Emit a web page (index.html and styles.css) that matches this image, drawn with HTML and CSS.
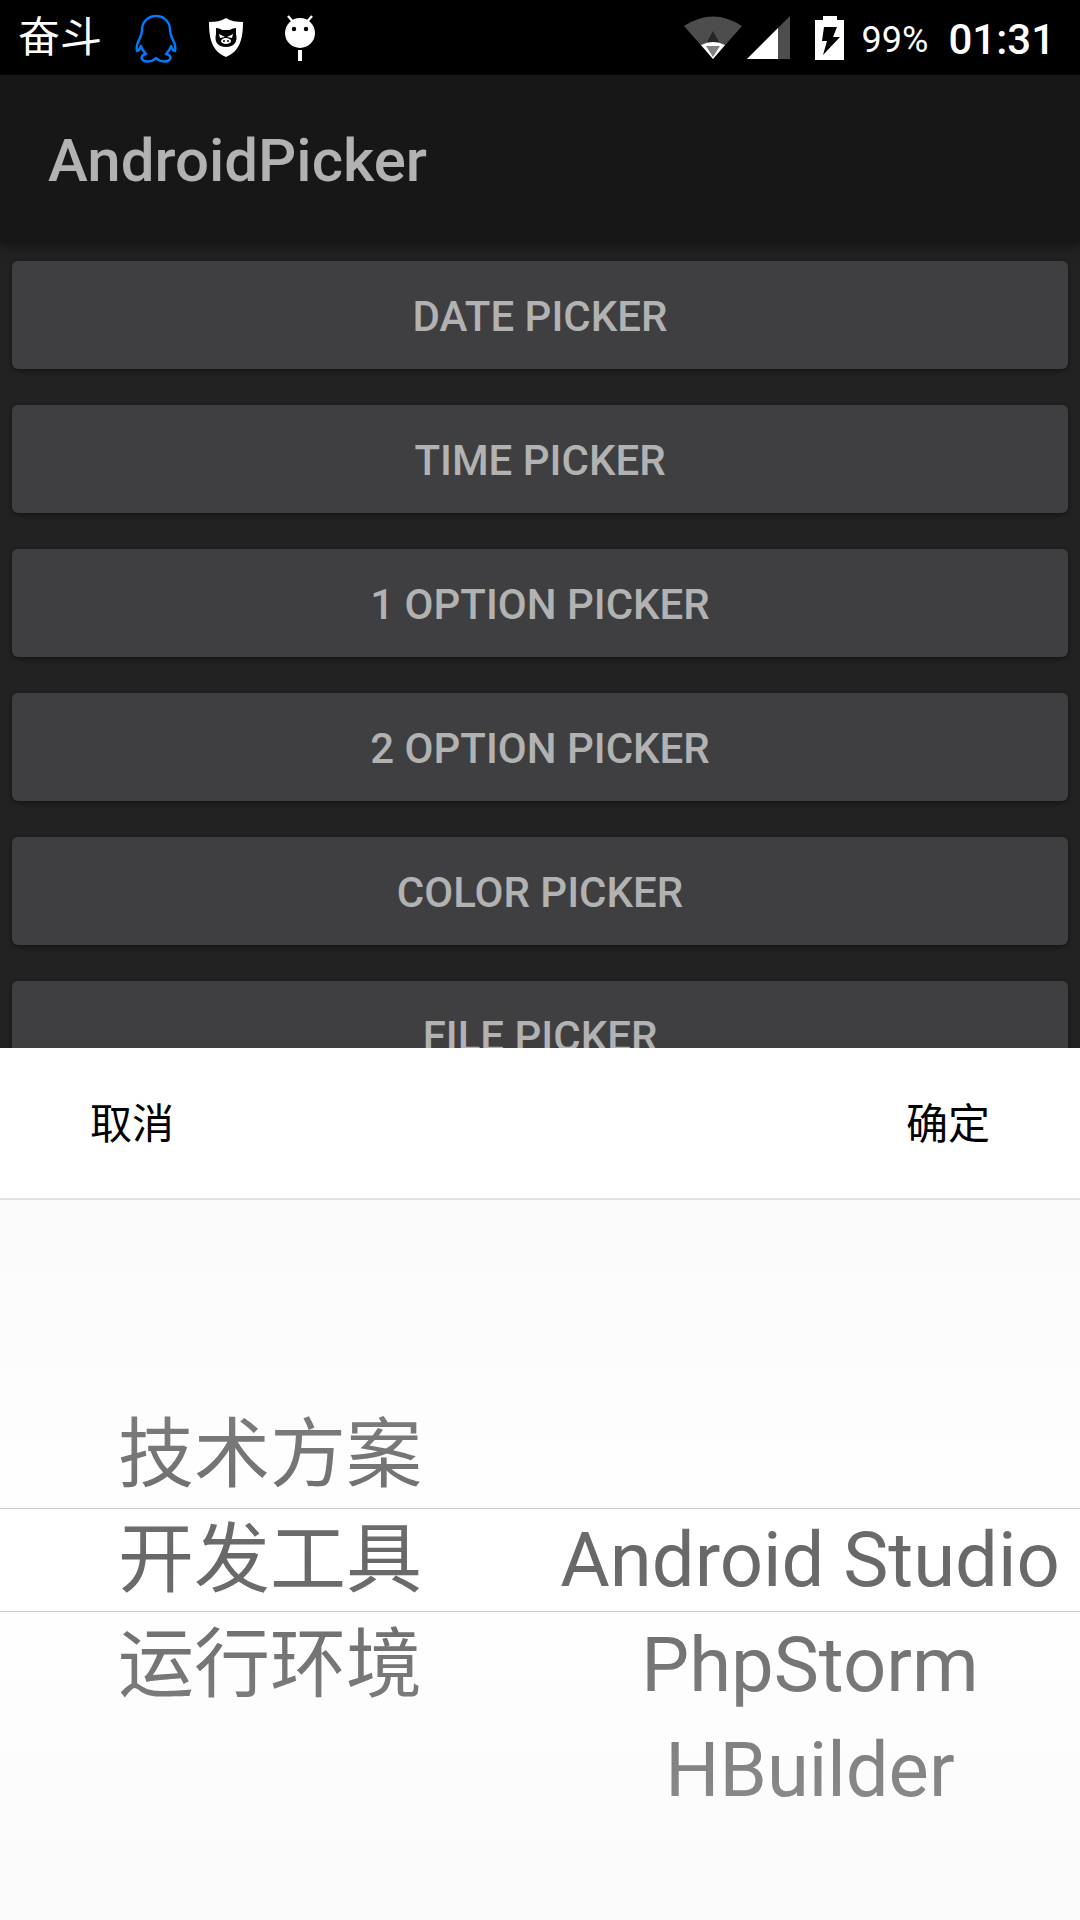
FILE: index.html
```html
<!DOCTYPE html>
<html lang="zh-CN">
<head>
<meta charset="utf-8">
<meta name="viewport" content="width=device-width, initial-scale=1">
<title>AndroidPicker</title>
<link rel="stylesheet" href="styles.css">
</head>
<body>
<div class="screen">
  <div class="status-bar">
    <span class="carrier">奋斗</span>
    <svg class="icon notice" viewBox="0 0 42 50" aria-hidden="true"><path d="M21 3C13 3 7 9 7 17c0 3-1 5-2 8-3 5-4 9-3 13 1 0 3-2 4-5 1 4 3 6 5 8-5 1-6 5-2 7 4 1 9 0 12-3 3 3 8 4 12 3 4-2 3-6-2-7 2-2 4-4 5-8 1 3 3 5 4 5 1-4 0-8-3-13-1-3-2-5-2-8C35 9 29 3 21 3z" fill="none" stroke="#007aff" stroke-width="2.4" stroke-linejoin="round"/></svg>
    <svg class="icon shield" viewBox="0 0 36 40" aria-hidden="true"><path d="M18 0c5 3 10 4 17 4 0 17-3 29-17 35C4 33 1 21 1 4 8 4 13 3 18 0z" fill="#fff"/><path d="M8 10c3 0 5 1 6 2h8c1-1 3-2 6-2v6c2 8-2 13-10 13S6 24 8 16z" fill="#000"/><path d="M11 16l6 3-5 1zM25 16l-6 3 5 1z" fill="#fff"/><ellipse cx="18" cy="23" rx="5" ry="3" fill="#fff"/><circle cx="16" cy="23" r="1"/><circle cx="20" cy="23" r="1"/></svg>
    <svg class="icon robot" viewBox="0 0 32 48" aria-hidden="true"><path d="M4 2l6 7M28 2l-6 7" stroke="#fff" stroke-width="2.4"/><circle cx="16" cy="19" r="15" fill="#fff"/><circle cx="10" cy="15" r="2.2"/><circle cx="22" cy="15" r="2.2"/><path d="M14 36h4v11h-4z" fill="#fff"/></svg>
    <svg class="icon wifi" viewBox="0 0 58 44" aria-hidden="true"><path d="M0 10Q29-9 58 10L29 43z" fill="#4d4d4d"/><path d="M29 15l6 11H23z" fill="#262626"/><path d="M17 29q12-6 24 0L29 43z" fill="#fff"/><path d="M22 30h14l-7 11z" fill="#808080"/></svg>
    <svg class="icon signal" viewBox="0 0 43 43" aria-hidden="true"><path d="M0 43L43 0v43z" fill="#4d4d4d"/><path d="M0 43L31 12v31z" fill="#fff"/></svg>
    <svg class="icon battery" viewBox="0 0 30 44" aria-hidden="true"><path d="M8 0h14v4h7v40H0V4h8z" fill="#fff"/><path d="M9 11h13l-4 10h7L8 39l4-14H7z" fill="#000"/></svg>
    <span class="percent">99%</span>
    <time class="clock">01:31</time>
  </div>
  <header class="app-bar"><h1 class="title">AndroidPicker</h1></header>
  <main class="menu">
    <button class="menu-button" type="button">DATE PICKER</button>
    <button class="menu-button" type="button">TIME PICKER</button>
    <button class="menu-button" type="button">1 OPTION PICKER</button>
    <button class="menu-button" type="button">2 OPTION PICKER</button>
    <button class="menu-button" type="button">COLOR PICKER</button>
    <button class="menu-button" type="button">FILE PICKER</button>
  </main>
  <section class="sheet" role="dialog" aria-label="选择">
    <div class="sheet-actions">
      <button class="action" type="button">取消</button>
      <button class="action" type="button">确定</button>
    </div>
    <div class="wheels">
      <ul class="wheel">
        <li class="option"></li>
        <li class="option">技术方案</li>
        <li class="option selected">开发工具</li>
        <li class="option">运行环境</li>
        <li class="option"></li>
      </ul>
      <ul class="wheel">
        <li class="option"></li>
        <li class="option"></li>
        <li class="option selected">Android Studio</li>
        <li class="option">PhpStorm</li>
        <li class="option">HBuilder</li>
      </ul>
    </div>
  </section>
</div>
</body>
</html>
```

FILE: styles.css
```css
* {
  box-sizing: border-box;
}

body {
  margin: 0;
  background: #222;
  font-family: Roboto, "Noto Sans CJK SC", sans-serif;
}

button {
  border: 0;
  font: inherit;
}

.screen {
  display: flex;
  flex-direction: column;
  height: 100vh;
  overflow: hidden;
}

.status-bar {
  display: flex;
  flex: none;
  align-items: center;
  height: 75px;
  padding: 0 25px 0 18px;
  background: #000;
  color: #fff;
}

.icon {
  flex: none;
}

.carrier {
  font-size: 42px;
  line-height: 74px;
}

.notice {
  width: 42px;
  height: 50px;
  margin-left: 33px;
}

.shield {
  width: 36px;
  height: 40px;
  margin-left: 31px;
}

.robot {
  width: 32px;
  height: 48px;
  margin-left: 40px;
}

.wifi {
  width: 58px;
  height: 44px;
  margin-left: auto;
}

.signal {
  width: 43px;
  height: 43px;
  margin-left: 5px;
}

.battery {
  width: 30px;
  height: 44px;
  margin-left: 25px;
}

.percent,
.clock {
  padding-top: 4px;
  line-height: 72px;
}

.percent {
  margin-left: 17px;
  font-size: 36px;
}

.clock {
  margin-left: 20px;
  font-size: 42px;
  font-weight: 500;
}

.app-bar {
  display: flex;
  flex: none;
  align-items: center;
  height: 168px;
  padding: 4px 48px 0;
  background: #171717;
  box-shadow: 0 4px 12px rgba(0, 0, 0, 0.4);
}

.title {
  margin: 0;
  color: #b2b2b2;
  font-size: 60px;
  font-weight: 500;
  line-height: 72px;
}

.menu {
  display: flex;
  flex: 1 1 0;
  flex-direction: column;
  gap: 36px;
  min-height: 0;
  padding: 18px 12px 0;
  overflow: hidden;
}

.menu-button {
  flex: none;
  height: 108px;
  padding: 2px 24px 0;
  border-radius: 6px;
  background: #3f3f41;
  box-shadow: 0 2px 5px rgba(0, 0, 0, 0.4);
  color: #b2b2b2;
  font-size: 42px;
  font-weight: 500;
}

.sheet {
  flex: none;
  background: #fff;
}

.sheet-actions {
  display: flex;
  justify-content: space-between;
  height: 152px;
  border-bottom: 2px solid #e1e1e1;
}

.action {
  width: 264px;
  padding: 4px 24px 0;
  background: transparent;
  color: #000;
  font-size: 42px;
  line-height: 50px;
}

.wheels {
  position: relative;
  display: grid;
  grid-template-columns: 1fr 1fr;
  background: linear-gradient(#fafafa, #fff 42%, #fff 58%, #fafafa);
}

/* Fades the options out away from the selected row. */
.wheels::after {
  position: absolute;
  inset: 0;
  background: linear-gradient(rgba(250, 250, 250, 0.34), rgba(255, 255, 255, 0.01), rgba(250, 250, 250, 0.34));
  content: "";
  pointer-events: none;
}

.wheel {
  display: grid;
  grid-auto-rows: 105px;
  margin: 0;
  padding: 98px 0 97px;
  list-style: none;
}

.option {
  color: #666;
  font-size: 76px;
  line-height: 105px;
  text-align: center;
  white-space: nowrap;
}

.selected {
  height: 104px;
  border-top: 1px solid #cfcbcd;
  border-bottom: 1px solid #cfcbcd;
  line-height: 102px;
}
```
